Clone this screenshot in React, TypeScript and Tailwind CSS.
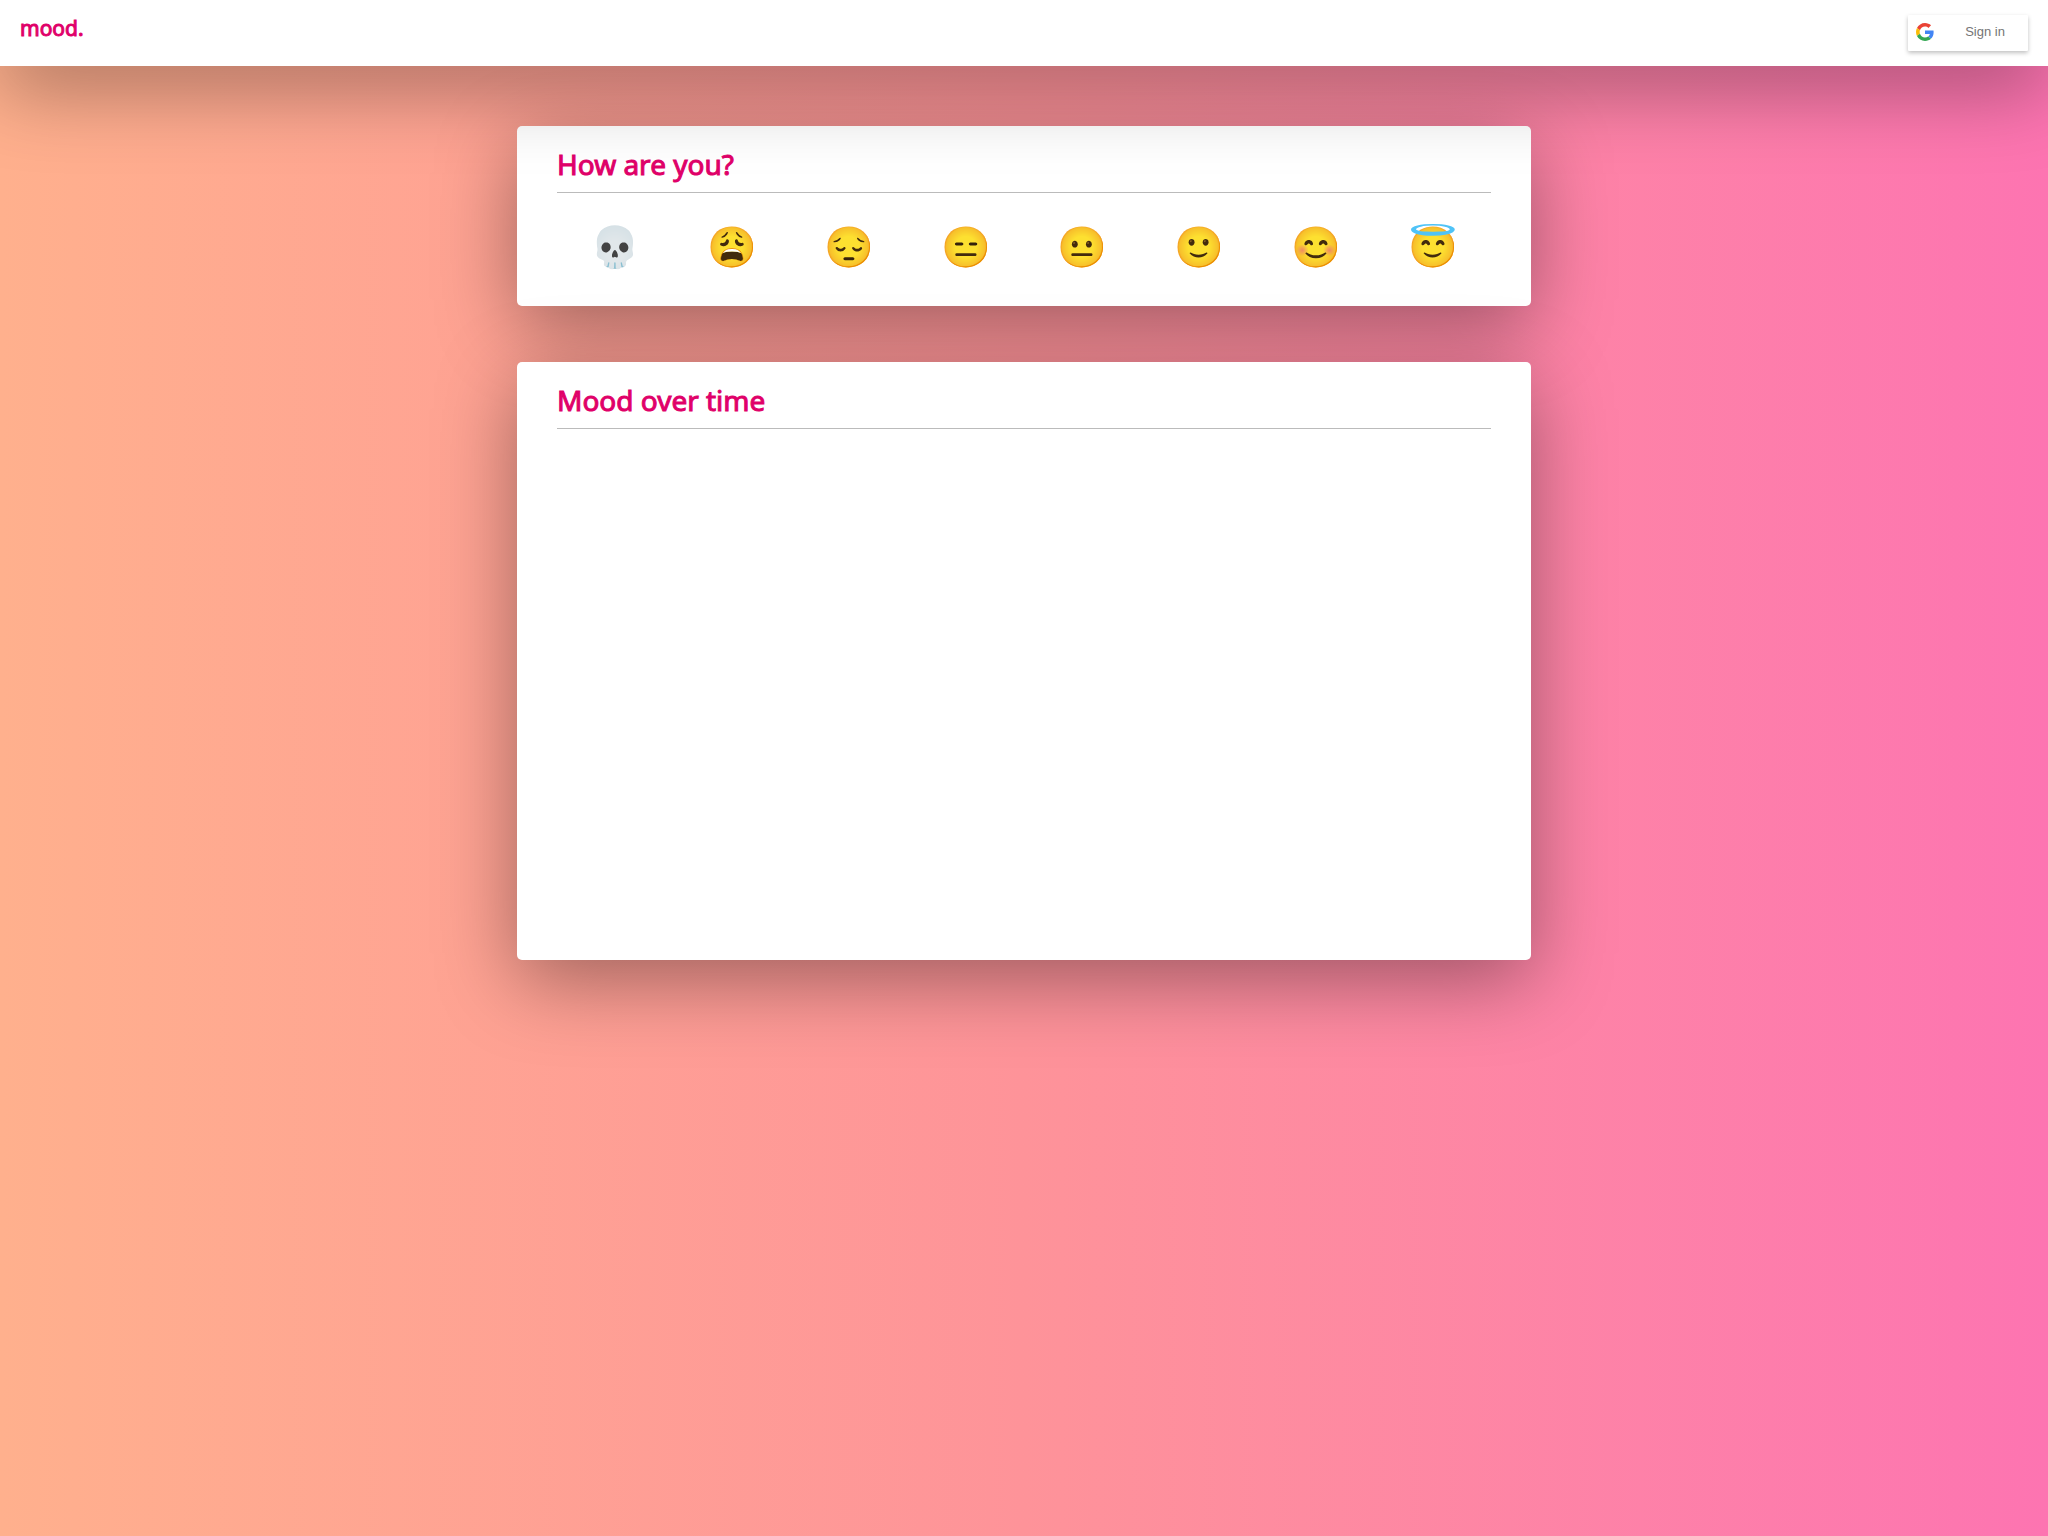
const moods = [
  { emoji: "💀", name: "Dead" },
  { emoji: "😩", name: "Weary" },
  { emoji: "😔", name: "Pensive" },
  { emoji: "😑", name: "Expressionless" },
  { emoji: "😐", name: "Neutral" },
  { emoji: "🙂", name: "Slightly happy" },
  { emoji: "😊", name: "Happy" },
  { emoji: "😇", name: "Blessed" },
];

function GoogleLogo() {
  return (
    <svg viewBox="0 0 48 48" className="size-[18px]" aria-hidden="true">
      <path fill="#EA4335" d="M24 9.5c3.54 0 6.71 1.22 9.21 3.6l6.85-6.85C35.9 2.38 30.47 0 24 0 14.62 0 6.51 5.38 2.56 13.22l7.98 6.19C12.43 13.72 17.74 9.5 24 9.5z" />
      <path fill="#4285F4" d="M46.98 24.55c0-1.57-.15-3.09-.38-4.55H24v9.02h12.94c-.58 2.96-2.26 5.48-4.78 7.18l7.73 6c4.51-4.18 7.09-10.36 7.09-17.65z" />
      <path fill="#FBBC05" d="M10.53 28.59c-.48-1.45-.76-2.99-.76-4.59s.27-3.14.76-4.59l-7.98-6.19C.92 16.46 0 20.12 0 24c0 3.88.92 7.54 2.56 10.78l7.97-6.19z" />
      <path fill="#34A853" d="M24 48c6.48 0 11.93-2.13 15.89-5.81l-7.73-6c-2.15 1.45-4.92 2.3-8.16 2.3-6.26 0-11.57-4.22-13.47-9.91l-7.98 6.19C6.51 42.62 14.62 48 24 48z" />
    </svg>
  );
}

export default function App() {
  return (
    <div className="min-h-screen bg-linear-to-r from-[#ffb08d] via-[#fe9399] to-[#fd74b1] font-['Noto_Sans',sans-serif] text-[#e00069]">
      <header className="relative z-10 flex h-[66px] items-start justify-between bg-white px-5 shadow-[0_20px_80px_rgba(0,0,0,0.38)]">
        <a href="#" className="pt-[13px] text-[21px] leading-[30px] [-webkit-text-stroke:1px_#e00069]">mood.</a>
        <button className="mt-[15px] flex h-9 w-[120px] items-center rounded-[1px] bg-white pb-[2px] pl-2 font-['Liberation_Sans',sans-serif] text-[13px] text-[#757575] shadow-[0_2px_4px_rgba(0,0,0,0.25)]">
          <GoogleLogo />
          <span className="flex-1 pl-2 text-center">Sign in</span>
        </button>
      </header>
      <main className="mx-auto flex max-w-[1014px] flex-col gap-14 pt-[60px]">
        <section className="rounded-[5px] bg-white px-10 pt-[19px] pb-[34px] shadow-[0_20px_80px_rgba(0,0,0,0.38)]">
          <h1 className="border-b border-[#bbb] pb-[9px] text-[28px] leading-[38px] [-webkit-text-stroke:1px_#e00069]">How are you?</h1>
          <div className="flex justify-around pt-[27px]">
            {moods.map(({ emoji, name }) => (
              <button key={name} aria-label={name} className="text-[40px] leading-[52px]">{emoji}</button>
            ))}
          </div>
        </section>
        <section className="h-[598px] rounded-[5px] bg-white px-10 pt-[19px] shadow-[0_20px_80px_rgba(0,0,0,0.38)]">
          <h2 className="border-b border-[#bbb] pb-[9px] text-[28px] leading-[38px] [-webkit-text-stroke:1px_#e00069]">Mood over time</h2>
        </section>
      </main>
    </div>
  );
}
